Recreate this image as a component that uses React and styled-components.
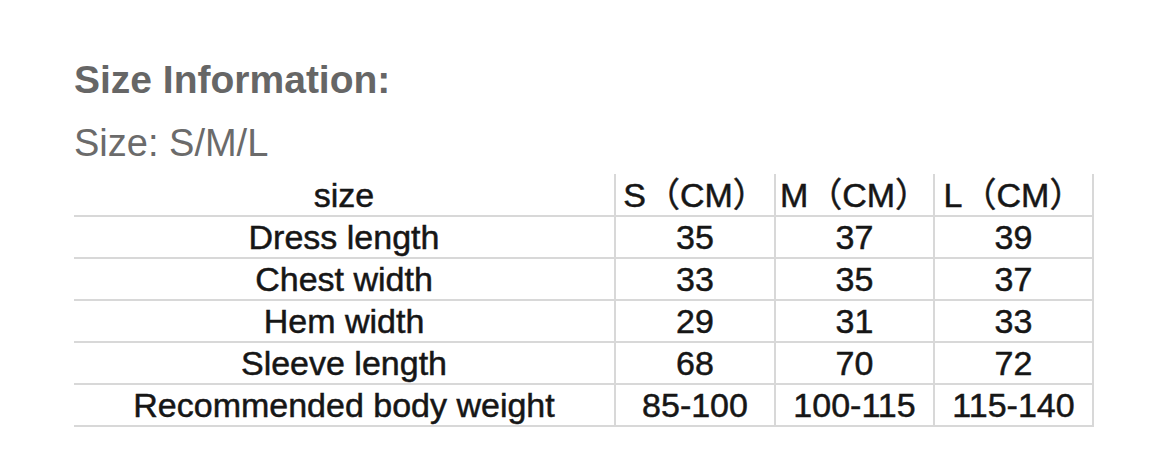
import React from 'react';
import styled, {createGlobalStyle} from 'styled-components';

const GlobalStyle = createGlobalStyle`
  body {
    margin: 0;
    background: #fff;
  }
`;

const Page = styled.div`
  width: 1170px;
  height: 449px;
  padding: 56px 0 0 74px;
  box-sizing: border-box;
  font-family: 'Liberation Sans', Arial, sans-serif;
`;

const Title = styled.h2`
  margin: 0;
  font-size: 39px;
  line-height: 48px;
  font-weight: 700;
  color: #666;
`;

const SubTitle = styled.p`
  margin: 15px 0 0;
  font-size: 38px;
  line-height: 48px;
  color: #6b6b6b;
`;

const Table = styled.table`
  margin-top: 7px;
  border-collapse: collapse;
  font-family: 'Liberation Sans', 'Noto Sans CJK SC', sans-serif;
  font-size: 34px;
  color: #161616;
  -webkit-text-stroke: 0.5px #161616;
`;

const Row = styled.tr`
  height: 42px;
  border-bottom: 2px solid #d8d8d8;
`;

const Cell = styled.td`
  width: ${(p) => p.$w}px;
  padding: 0;
  text-align: center;
  line-height: 40px;
  white-space: nowrap;
  border-right: ${(p) => (p.$first ? 'none' : '2px solid #d8d8d8')};
  border-left: ${(p) => (p.$next ? '2px solid #d8d8d8' : 'none')};
`;

const widths = [540, 158, 157, 157];

const rows = [
  ['size', 'S（CM）', 'M（CM）', 'L（CM）'],
  ['Dress length', '35', '37', '39'],
  ['Chest width', '33', '35', '37'],
  ['Hem width', '29', '31', '33'],
  ['Sleeve length', '68', '70', '72'],
  ['Recommended body weight', '85-100', '100-115', '115-140'],
];

export default function App() {
  return (
    <>
      <GlobalStyle />
      <Page>
        <Title>Size Information:</Title>
        <SubTitle>Size: S/M/L</SubTitle>
        <Table>
          <tbody>
            {rows.map((r, i) => (
              <Row key={i}>
                {r.map((c, j) => (
                  <Cell key={j} $w={widths[j]} $first={j === 0} $next={j === 1}>
                    {c}
                  </Cell>
                ))}
              </Row>
            ))}
          </tbody>
        </Table>
      </Page>
    </>
  );
}
